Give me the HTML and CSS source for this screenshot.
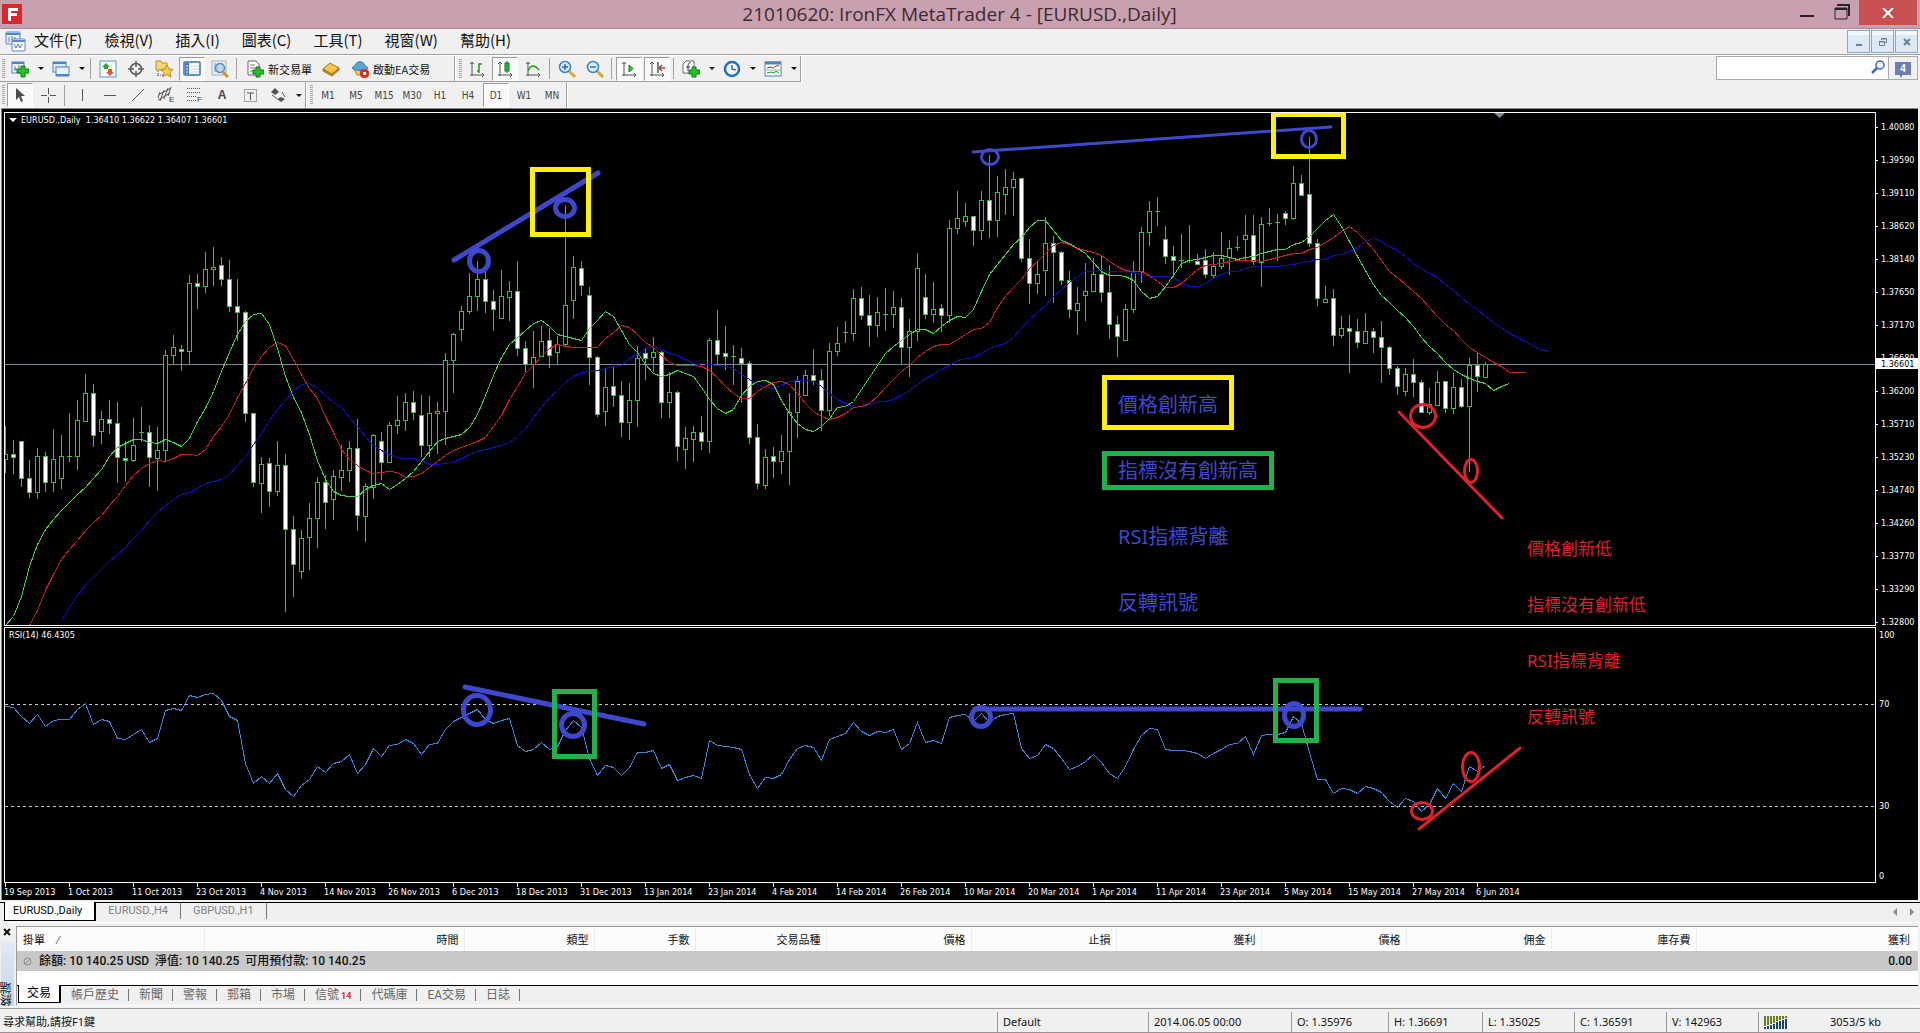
FILE: index.html
```html
<!DOCTYPE html>
<html lang="zh-Hant">
<head>
<meta charset="utf-8">
<title>21010620: IronFX MetaTrader 4 - [EURUSD.,Daily]</title>
<link rel="stylesheet" href="styles.css">
</head>
<body>
<header class="titlebar">
  <svg class="app-logo" width="20" height="20" viewBox="0 0 20 20"><rect width="20" height="20" fill="#e0242b"/><path d="M6 4h10v3H9v2h6v3H9v5H6z" fill="#fff"/></svg>
  <h1>21010620: IronFX MetaTrader 4 - [EURUSD.,Daily]</h1>
  <div class="win-buttons">
    <button class="win-min" aria-label="最小化"><svg width="14" height="14"><path d="M0 12h14" stroke="#2a2028" stroke-width="2"/></svg></button>
    <button class="win-max" aria-label="還原"><svg width="16" height="16"><path d="M1 4h12v11H1z" fill="none" stroke="#2a2028"/><path d="M1 5h12M3 1h12v11" fill="none" stroke="#2a2028" stroke-width="2"/></svg></button>
    <button class="win-close" aria-label="關閉"><svg width="12" height="10"><path d="M1 0l10 10M11 0L1 10" stroke="#fff" stroke-width="2"/></svg></button>
  </div>
</header>

<nav class="menubar">
  <svg class="menu-logo" width="21" height="21" viewBox="0 0 21 21"><rect x="1" y="1" width="14" height="12" rx="1" fill="#e4eefb" stroke="#5a86c6"/><path d="M1 3h14" stroke="#5a86c6" stroke-width="2"/><path d="M4 6v5M7 5v4M10 6v4" stroke="#5a86c6"/><rect x="7" y="8" width="13" height="12" rx="1" fill="#fff" stroke="#5a86c6"/><path d="M7 10h13" stroke="#5a86c6" stroke-width="2"/><path d="M9 13l2 4 2-4 2 4 2-4" fill="none" stroke="#4a78bc"/></svg>
  <button>文件(F)</button><button>檢視(V)</button><button>插入(I)</button><button>圖表(C)</button><button>工具(T)</button><button>視窗(W)</button><button>幫助(H)</button>
  <div class="mdi-buttons">
    <button aria-label="最小化圖表"><svg width="10" height="10"><path d="M2 8h6" stroke="#6d7f92" stroke-width="2"/></svg></button>
    <button aria-label="還原圖表"><svg width="10" height="10"><path d="M1.500 4.500h5v4h-5zM3.500 3V1.500h5v4H7" fill="none" stroke="#6d7f92"/><path d="M1 5h6M3 2h6" stroke="#6d7f92"/></svg></button>
    <button aria-label="關閉圖表"><svg width="10" height="10"><path d="M2 2l6 6M8 2L2 8" stroke="#6d7f92" stroke-width="2"/></svg></button>
  </div>
</nav>

<div class="toolbar top-toolbar">
  <div class="group main-group">
    <span class="grip"></span>
    <button class="tool" aria-label="新圖表"><svg viewBox="0 0 18 18"><rect x="1" y="2" width="12" height="11" fill="#f6faff" stroke="#4f84bd"/><path d="M1 3h12" stroke="#4f84bd" stroke-width="2"/><path d="M4 6v5M3 9h3M8 5v4" stroke="#5d7894"/><path d="M10 6h4v3h4v4h-4v4h-4v-4H6V9h4z" fill="#25c425" stroke="#107a10"/></svg></button><button class="drop" aria-label="更多"></button>
    <button class="tool" aria-label="範本組"><svg viewBox="0 0 18 18"><rect x="1" y="2" width="13" height="10" fill="#d9e9f8" stroke="#4f84bd"/><path d="M1 3h13" stroke="#4f84bd" stroke-width="2"/><rect x="4" y="7" width="13" height="9" fill="#e9f3fc" stroke="#4f84bd"/><path d="M4 15h13" stroke="#4f84bd" stroke-width="2"/></svg></button><button class="drop" aria-label="更多"></button>
    <span class="sep"></span>
    <button class="tool" aria-label="市場報價"><svg viewBox="0 0 18 18"><rect x="1" y="1" width="16" height="16" fill="#f8fcff" stroke="#4f9bd2"/><path d="M3 7l4-4 4 4H9v2H5V7z" fill="#28a830"/><path d="M7 12l4 4 4-4h-2V9H9v3z" fill="#e0562c"/></svg></button>
    <button class="tool" aria-label="數據窗口"><svg viewBox="0 0 18 18"><circle cx="9" cy="9" r="5.500" fill="none" stroke="#555" stroke-width="1.500"/><path d="M9 1v6M9 11v6M1 9h6M11 9h6" stroke="#555" stroke-width="1.500"/></svg></button>
    <button class="tool" aria-label="收藏"><svg viewBox="0 0 18 18"><path d="M1 3V1h5l1 2h5v7H1z" fill="#f4d673" stroke="#b9912c"/><path d="M3 11v6M3 15h5" stroke="#444" stroke-dasharray="1 1"/><path d="M12 5l2 4 4 .5-3 3 1 4.500-4-2.500-4 2.500 1-4.500-3-3 4-.5z" fill="#f9cf3d" stroke="#b9862a"/></svg></button>
    <button class="tool pressed" aria-label="導航"><svg viewBox="0 0 18 18"><rect x="1" y="2" width="16" height="13" rx="1" fill="#fff" stroke="#2f6fb8" stroke-width="1.500"/><path d="M2 3h4v11H2z" fill="#3b7cc4"/><path d="M8 6h8M8 9h8M8 12h8" stroke="#c5d3e4"/><path d="M3 6h2M3 9h2M3 12h2" stroke="#fff"/></svg></button>
    <button class="tool" aria-label="策略測試"><svg viewBox="0 0 18 18"><rect x="1" y="1" width="14" height="14" fill="#e8eef5" stroke="#9fb0c0"/><path d="M4 3v9M7 3v9M11 3v9" stroke="#6c8fb3"/><circle cx="9" cy="8" r="4.500" fill="#b8d9ee" fill-opacity=".7" stroke="#5b8fb5" stroke-width="1.500"/><path d="M12 12l5 5" stroke="#c79a2d" stroke-width="3"/></svg></button>
    <span class="sep"></span>
    <button class="labelled"><svg viewBox="0 0 18 18"><path d="M2 1h8l3 3v11H2z" fill="#fff" stroke="#666"/><path d="M4 5h5M4 8h6M4 11h5" stroke="#777"/><path d="M10 7h4v3h4v4h-4v3h-4v-3H7v-4h3z" fill="#25c425" stroke="#107a10"/></svg>新交易單</button>
    <button class="tool" aria-label="編輯器"><svg viewBox="0 0 18 18"><path d="M1 9l7-6 9 5-7 7z" fill="#f3c74b" stroke="#a8741a"/><path d="M1 9v2l9 5 7-6V8l-7 6z" fill="#c98e1d" stroke="#a8741a"/></svg></button>
    <button class="labelled ea-trade"><svg viewBox="0 0 18 18"><path d="M3 9h12l-2 6H6z" fill="#f2c94e" stroke="#b48523"/><path d="M1 8c1-2 3-1 4-4 1-3 7-3 8 0 1 3 3 2 4 4-3 3-13 3-16 0z" fill="#58a6d8" stroke="#2f79ad"/><rect x="9" y="9" width="9" height="9" rx="4" fill="#d9301c"/><rect x="12" y="12" width="3" height="3" fill="#fff"/></svg>啟動EA交易</button>
  </div>
  <div class="group">
    <span class="grip"></span>
    <button class="tool" aria-label="柱狀圖"><svg viewBox="0 0 18 18"><path d="M4 2v14M2 15h14M2 4l2-2 2 2M14 13l2 2-2 2" class="axis"/><path d="M9 11h2V4h3M11 4v9" fill="none" stroke="#189a18" stroke-width="1.500"/></svg></button>
    <button class="tool pressed" aria-label="K線圖"><svg viewBox="0 0 18 18"><path d="M4 2v14M2 15h14M2 4l2-2 2 2M14 13l2 2-2 2" class="axis"/><path d="M11 1v12" stroke="#0b7a1b"/><rect x="9" y="3" width="4" height="8" fill="#24b534" stroke="#0b7a1b"/></svg></button>
    <button class="tool" aria-label="折線圖"><svg viewBox="0 0 18 18"><path d="M4 2v14M2 15h14M2 4l2-2 2 2M14 13l2 2-2 2" class="axis"/><path d="M4 11c3-6 6-7 11-1" fill="none" stroke="#189a18" stroke-width="1.500"/></svg></button>
    <span class="sep"></span>
    <button class="tool" aria-label="放大"><svg viewBox="0 0 18 18"><path d="M11 11l6 6" stroke="#d6ab33" stroke-width="3"/><circle cx="7" cy="7" r="5.500" fill="#d8efff" stroke="#3d83c4" stroke-width="1.500"/><path d="M4 7h6M7 4v6" stroke="#2a6fb4" stroke-width="1.500"/></svg></button>
    <button class="tool" aria-label="縮小"><svg viewBox="0 0 18 18"><path d="M11 11l6 6" stroke="#d6ab33" stroke-width="3"/><circle cx="7" cy="7" r="5.500" fill="#d8efff" stroke="#3d83c4" stroke-width="1.500"/><path d="M4 7h6" stroke="#2a6fb4" stroke-width="1.500"/></svg></button>
    <span class="sep"></span>
    <button class="tool pressed" aria-label="自動捲動"><svg viewBox="0 0 18 18"><path d="M4 2v14M2 15h14M2 4l2-2 2 2M14 13l2 2-2 2" class="axis"/><path d="M9 5l4 3.500L9 12z" fill="#3fc04a" stroke="#0b7a1b"/></svg></button>
    <button class="tool pressed" aria-label="圖表平移"><svg viewBox="0 0 18 18"><path d="M4 2v14M2 15h14M2 4l2-2 2 2M14 13l2 2-2 2" class="axis"/><path d="M10 2v11" stroke="#2a5f96" stroke-width="1.500"/><path d="M17 8h-5M14 5l-3 3 3 3" fill="none" stroke="#b4441c" stroke-width="1.500"/></svg></button>
    <span class="sep"></span>
    <button class="tool" aria-label="指標"><svg viewBox="0 0 18 18"><path d="M4 1h8v12H1V4z" fill="#fff" stroke="#666"/><path d="M9 3c-2-1-3 1-3 3v5M4 7h4" fill="none" stroke="#333"/><path d="M10 7h4v3h4v4h-4v3h-4v-3H7v-4h3z" fill="#25c425" stroke="#107a10"/></svg></button><button class="drop" aria-label="更多"></button>
    <button class="tool" aria-label="週期"><svg viewBox="0 0 18 18"><circle cx="9" cy="9" r="7" fill="#f4faff" stroke="#2372bd" stroke-width="2.500"/><path d="M9 5v4l4 1" fill="none" stroke="#334" stroke-width="1.200"/></svg></button><button class="drop" aria-label="更多"></button>
    <button class="tool" aria-label="模板"><svg viewBox="0 0 18 18"><rect x="1" y="2" width="16" height="14" fill="#fff" stroke="#4f84bd"/><path d="M1 3h16" stroke="#4f84bd" stroke-width="3"/><path d="M3 8l3-1 3 1 3-2 3-.5" fill="none" stroke="#8a3d1d"/><path d="M3 13l4-1 3 1 2-2 3 2" fill="none" stroke="#189a18"/><path d="M1 10h16" stroke="#9ab"/></svg></button><button class="drop" aria-label="更多"></button>
  </div>
  <div class="search">
    <input type="text" aria-label="搜尋">
    <svg class="search-icon" width="14" height="14" viewBox="0 0 14 14"><circle cx="9" cy="5" r="4" fill="#eef5ff" stroke="#3a63c0" stroke-width="1.500"/><path d="M6 8l-5 5" stroke="#3a63c0" stroke-width="2.500"/></svg>
    <button class="chat"><svg width="16" height="4" viewBox="0 0 16 4" class="tail"><path d="M3 0h4v4z" fill="#6980b0"/></svg><span>4</span></button>
  </div>
</div>

<div class="toolbar low-toolbar">
  <div class="group">
    <span class="grip"></span>
    <button class="tool pressed" aria-label="游標"><svg viewBox="0 0 18 18"><path d="M5 2v12l3-3 2 5 2-1-2-5h4z" fill="#4c4c4c"/></svg></button>
    <button class="tool" aria-label="十字"><svg viewBox="0 0 18 18"><path d="M9.500 2v6M9.500 11v6M2 9.500h6M11 9.500h6" class="pen"/></svg></button>
    <span class="sep"></span>
    <button class="tool" aria-label="垂直線"><svg viewBox="0 0 18 18"><path d="M9.500 3v12" class="pen"/></svg></button>
    <button class="tool" aria-label="水平線"><svg viewBox="0 0 18 18"><path d="M3 9.500h12" class="pen"/></svg></button>
    <button class="tool" aria-label="趨勢線"><svg viewBox="0 0 18 18"><path d="M3 15L15 3" class="pen"/></svg></button>
    <button class="tool" aria-label="通道"><svg viewBox="0 0 18 18"><path d="M1 9l13-7M1 14l12-7M3 15l4-11M7 13l4-11M11 10l3-9M1 12l2-6" class="pen"/><text x="12" y="16" class="tag">E</text></svg></button>
    <button class="tool" aria-label="斐波那契"><svg viewBox="0 0 18 18"><path d="M2 2.500h14M2 6.500h14M2 10.500h9M2 14.500h9" class="pen" stroke-dasharray="1 1"/><text x="12" y="16" class="tag">F</text></svg></button>
    <button class="tool glyph">A</button>
    <button class="tool" aria-label="文字標籤"><svg viewBox="0 0 18 18"><rect x="3.500" y="3.500" width="12" height="12" class="pen" stroke-dasharray="1 1"/><path d="M6 7h7M9.500 7v7" class="pen" stroke-width="2"/></svg></button>
    <button class="tool" aria-label="箭頭"><svg viewBox="0 0 18 18"><path d="M2 6l4-4 4 4-4 3zM8 13l4-2 4 2-4 3z" fill="#555"/><path d="M3 9l5 4M13 6l3 5" class="pen"/></svg></button><button class="drop" aria-label="更多"></button>
  </div>
  <div class="group periods">
    <span class="grip"></span>
    <button class="tool">M1</button><button class="tool">M5</button><button class="tool">M15</button><button class="tool">M30</button><button class="tool">H1</button><button class="tool">H4</button><button class="tool pressed">D1</button><button class="tool">W1</button><button class="tool">MN</button>
  </div>
</div>

<main class="chart">
  <section class="pane price-pane"><svg id="price"></svg>
    <p class="pane-title"><span class="caret"></span>EURUSD.,Daily&nbsp; 1.36410 1.36622 1.36407 1.36601</p>
  </section>
  <svg class="scale" id="price-scale"></svg>
  <section class="pane rsi-pane"><svg id="rsi"></svg>
    <p class="pane-title">RSI(14) 46.4305</p>
  </section>
  <svg class="scale" id="rsi-scale"></svg>
  <svg class="dates" id="dates"></svg>
  <ul class="note note-high"><li>價格創新高</li><li>指標沒有創新高</li><li>RSI指標背離</li><li>反轉訊號</li></ul>
  <ul class="note note-low"><li>價格創新低</li><li>指標沒有創新低</li><li>RSI指標背離</li><li>反轉訊號</li></ul>
</main>

<nav class="chart-tabs">
  <a class="active" href="#d">EURUSD.,Daily</a><a href="#h4">EURUSD.,H4</a><a href="#h1">GBPUSD.,H1</a>
  <svg class="tab-arrows" width="22" height="8"><path d="M4 0v8L0 4zM17 0v8l4-4z" fill="#8c8c8c"/></svg>
</nav>

<section class="terminal">
  <aside class="side"><button aria-label="關閉終端"><svg width="8" height="8"><path d="M1 1l6 6M7 1L1 7" stroke="#111" stroke-width="2"/></svg></button><span>終端</span></aside>
  <div class="terminal-body">
    <table>
      <colgroup><col class="c1"><col class="c2"><col class="c3"><col class="c4"><col class="c5"><col class="c6"><col class="c6"><col class="c6"><col class="c6"><col class="c6"><col class="c6"><col></colgroup>
      <thead><tr><th>掛單 <i>/</i></th><th>時間</th><th>類型</th><th>手數</th><th>交易品種</th><th>價格</th><th>止損</th><th>獲利</th><th>價格</th><th>佣金</th><th>庫存費</th><th>獲利</th></tr></thead>
      <tbody><tr><td colspan="11"><svg width="9" height="9"><circle cx="4.500" cy="4.500" r="3.500" fill="none" stroke="#888"/><path d="M2 7l5-5" stroke="#888"/></svg>餘額: 10 140.25 USD&nbsp; 淨值: 10 140.25&nbsp; 可用預付款: 10 140.25</td><td>0.00</td></tr></tbody>
    </table>
    <nav class="terminal-tabs"><a class="active" href="#t">交易</a><a href="#a">帳戶歷史</a><a href="#n">新聞</a><a href="#w">警報</a><a href="#m">郵箱</a><a href="#k">市場</a><a href="#s">信號<b>14</b></a><a href="#c">代碼庫</a><a href="#e">EA交易</a><a href="#l">日誌</a></nav>
  </div>
</section>

<footer class="status">
  <span class="help">尋求幫助,請按F1鍵</span><span class="s1">Default</span><span class="s2">2014.06.05 00:00</span><span class="s3">O: 1.35976</span><span class="s4">H: 1.36691</span><span class="s5">L: 1.35025</span><span class="s5">C: 1.36591</span><span class="s5">V: 142963</span>
  <span class="net"><svg width="24" height="13" viewBox="0 0 24 13"><path d="M1 0v10M4 0v9M7 0v8M10 0v7M13 0v5M16 0v4M19 0v3M22 0v2" stroke="#66801c" stroke-width="2"/><path d="M1 11v2M4 10v3M7 9v4M10 8v5M13 6v7M16 5v8M19 4v9M22 3v10" stroke="#1c4668" stroke-width="2"/></svg>3053/5 kb</span>
</footer>
<script src="chart.js"></script>
</body>
</html>
```
FILE: styles.css
```css
* { box-sizing: border-box; }
body {
  margin: 0;
  min-height: 100vh;
  display: flex;
  flex-direction: column;
  background: #f0f0f0;
  color: #111;
  font: 12px "Liberation Sans", "Noto Sans CJK TC", sans-serif;
  border-bottom: 1px solid #a58b95;
}
button { border: 0; padding: 0; background: none; color: inherit; font: inherit; }
a { color: inherit; text-decoration: none; }
ul, p, h1 { margin: 0; padding: 0; list-style: none; }

.titlebar {
  position: relative;
  height: 29px;
  display: flex;
  align-items: center;
  justify-content: space-between;
  padding: 0 3px 0 2px;
  background: #c9a0b0;
  border-bottom: 1px solid #ad8797;
}
.titlebar h1 { font: 19px/28px "Open Sans", "Noto Sans", sans-serif; color: #3b2a32; }
.win-buttons { display: flex; align-items: flex-start; position: absolute; right: 3px; top: 0; }
.win-buttons svg { display: block; }
.win-min { padding: 4px 20px 0 0; }
.win-max { padding: 4px 9px 0 0; }
.win-close { width: 58px; height: 25px; background: #c75050; display: grid; place-items: center; }
.titlebar::after { content: ""; width: 20px; }

.menubar {
  height: 26px;
  display: flex;
  align-items: center;
  gap: 22px;
  padding: 0 2px 0 5px;
  border-bottom: 1px solid #a0a0a0;
  font: 15px/21px "Noto Sans CJK TC", sans-serif;
}
.menubar > button { padding-bottom: 4px; }
.menu-logo { margin-right: -14px; }
.mdi-buttons { display: flex; gap: 1px; margin-left: auto; }
.mdi-buttons button { width: 23px; height: 23px; border: 1px solid #93a5bb; background: linear-gradient(#f2f8fd 20%, #dceaf8 20%); display: grid; place-items: center; }

.toolbar { height: 27px; display: flex; align-items: stretch; }
.top-toolbar { border-top: 1px solid #fff; }
.low-toolbar { height: 26px; }
.group { display: flex; align-items: center; border-right: 1px solid #a0a0a0; box-shadow: 1px 0 #fff; border-bottom: 1px solid #a0a0a0; }
.low-toolbar .group { border-bottom: 0; }
.group + .group { padding-left: 2px; }
.grip { width: 3px; height: 20px; margin: 0 1px 0 2px; background: repeating-linear-gradient(#a8a8a8 0 1px, #f0f0f0 1px 2px); }
.tool { width: 28px; height: 24px; display: grid; place-items: center; color: #444; font-size: 10px; }
.tool svg, .labelled svg { width: 18px; height: 18px; }
.pressed { width: 26px; margin: 0 1px; border: 1px solid #9c9c9c; border-right-color: #fff; border-bottom-color: #fff; background: #f9f9f9; }
.drop { width: 13px; height: 24px; display: grid; place-items: center; }
.drop::after { content: ""; border: 3px solid transparent; border-top-color: #111; border-bottom: 0; }
.sep { width: 1px; height: 21px; margin: 0 3px 0 2px; background: #a0a0a0; }
.labelled { display: flex; align-items: center; gap: 4px; padding: 0 5px 0 6px; font: 11px "Noto Sans CJK TC", sans-serif; }
.ea-trade { padding-right: 24px; }
.glyph { font-weight: bold; font-size: 12px; }
.periods .tool { font-family: "DejaVu Sans Condensed", sans-serif; }
.axis { fill: none; stroke: #555; stroke-width: 1; }
.pen { stroke: #555; stroke-width: 1; fill: none; }
.tag { font: 8px "Liberation Sans", sans-serif; fill: #333; }

.search { position: relative; margin-left: auto; margin-right: 2px; display: flex; height: 24px; }
.search input { width: 173px; border: 1px solid #a9a9a9; background: #fff; padding: 0 20px 0 4px; }
.search-icon { position: absolute; left: 155px; top: 4px; }
.chat { position: relative; width: 29px; border: 1px solid #a9a9a9; border-left: 0; display: grid; place-items: center; }
.chat span { width: 16px; height: 13px; background: #6980b0; color: #fff; font: bold 10px/13px "Liberation Sans", sans-serif; }
.chat .tail { position: absolute; left: 6px; top: 17px; }

.chart {
  position: relative;
  flex: 1;
  display: grid;
  grid-template: minmax(514px, 1fr) 256px 16px / 1fr 42px;
  row-gap: 1px;
  margin: 0 2px 0 1px;
  padding: 3px 0 0 2px;
  background: #000;
  border-left: 1px solid #888;
  border-top: 1px solid #888;
  color: #fff;
  overflow: hidden;
}
.pane { position: relative; border: 1px solid #fff; min-width: 0; overflow: hidden; }
.pane svg { display: block; width: 100%; height: 100%; }
.pane-title { position: absolute; left: 4px; top: 1px; font: 9px/13px "DejaVu Sans Condensed", sans-serif; color: #fff; }
.caret { display: inline-block; border: 4px solid transparent; border-top-color: #fff; border-bottom: 0; margin: 0 4px 1px 0; }
.scale { width: 42px; height: 100%; overflow: visible; }
.dates { grid-column: 1 / 3; width: 100%; height: 16px; overflow: visible; }
.chart text { font: 9px "DejaVu Sans Condensed", sans-serif; fill: #fff; }
.chart .tag-text { fill: #000; }
.crisp { shape-rendering: crispEdges; }
.note { position: absolute; font-family: "Noto Sans", "Noto Sans CJK TC", sans-serif; }
.note-high { left: 1116px; top: 263px; font-size: 20px; line-height: 66px; color: #3f48cc; }
.note-low { left: 1525px; top: 412px; font-size: 17px; line-height: 56px; color: #dc232b; }

.chart-tabs {
  height: 21px;
  margin-top: 2px;
  display: flex;
  align-items: flex-start;
  padding-left: 4px;
  border-top: 1px solid #000;
  border-bottom: 1px solid #fff;
  font: 11px Roboto, sans-serif;
  color: #808080;
}
.chart-tabs a { padding: 0 12px; line-height: 16px; }
.chart-tabs a + a { border-right: 1px solid #777; }
.chart-tabs .active { margin-top: -1px; padding: 0 12px 0 8px; line-height: 18px; color: #000; background: #fff; border: 1px solid #000; border-top: 0; border-right-width: 2px; }
.tab-arrows { margin: 5px 5px 0 auto; }

.terminal { display: flex; margin-top: 3px; }
.side { width: 16px; display: flex; flex-direction: column; align-items: center; gap: 5px; padding: 1px 2px 0 0; }
.side button { height: 10px; }
.side svg { display: block; }
.side span { flex: 1; width: 13px; background: linear-gradient(#c2d5e5, #dfeaf4); writing-mode: vertical-rl; transform: rotate(180deg); font-size: 12px; line-height: 13px; }
.terminal-body { flex: 1; min-width: 0; margin-right: 2px; border: 1px solid #999; border-right: 0; border-bottom: 1px solid #fff; background: #fff; }
table { width: 100%; border-collapse: collapse; table-layout: fixed; }
.c1 { width: 187px; } .c2 { width: 260px; } .c3 { width: 130px; } .c4 { width: 101px; } .c5 { width: 131px; } .c6 { width: 145px; }
th { height: 24px; padding: 0 5px; font: 11px "Noto Sans", "Noto Sans CJK TC", sans-serif; text-align: right; border-right: 1px solid #e8ecf4; background: #fcfcfc; }
th:first-child { text-align: left; padding-left: 6px; }
th:last-child { border-right: 0; padding-right: 8px; }
th i { margin-left: 8px; color: #777; }
td { height: 20px; padding: 0 6px; background: #c8c8c8; font: 500 12px/18px Roboto, "Noto Sans CJK TC", sans-serif; }
td svg { margin-right: 7px; vertical-align: -1px; }
td:last-child { text-align: right; }
.terminal-tabs { display: flex; margin-top: 14px; padding-left: 1px; height: 20px; border-top: 1px solid #000; background: #f0f0f0; font-family: Roboto, "Noto Sans CJK TC", sans-serif; color: #666; }
.terminal-tabs a { position: relative; padding: 0 10px; line-height: 18px; }
.terminal-tabs a + a::after { content: ""; position: absolute; right: 0; top: 3px; height: 12px; border-right: 1px solid #777; }
.terminal-tabs .active { margin-top: -1px; line-height: 17px; height: 18px; color: #000; background: #fff; border: solid #000; border-width: 0 2px 1px 1px; padding: 0 8px; }
.terminal-tabs b { margin-left: 2px; font-size: 9px; color: #dd2a2a; }

.status { display: flex; height: 24px; margin-top: 2px; padding-top: 3px; border-top: 1px solid #999; font: 11px/20px "Noto Sans", "Noto Sans CJK TC", sans-serif; }
.status span { height: 20px; padding-left: 5px; border-left: 1px solid #999; white-space: nowrap; }
.status .help { flex: 1; border: 0; padding-left: 3px; }
.s1 { width: 151px; } .s2 { width: 143px; } .s3 { width: 97px; } .s4 { width: 94px; } .s5 { width: 92px; }
.status .net { width: 162px; display: flex; align-items: center; gap: 42px; }
```
FILE: chart.js
```js
// Chart data is kept in thirds of a pixel, one entry per 8px bar.
const BAR = 8;
const row = v => Math.floor(v / 3);

// high, body top, body bottom, low, 1 = bearish (filled)
const candles = `950,1034,1048,1090,0 990,1034,1042,1094,1 994,994,1105,1133,1 1050,1105,1148,1166,1 1014,1040,1148,1169,0 1026,1040,1117,1147,1 957,1048,1117,1146,0 975,1040,1105,1139,0 909,1040,1040,1058,0 870,931,1040,1082,0
792,850,933,936,0 822,850,976,1013,1 904,928,964,1004,0 870,928,940,974,1 877,940,1042,1121,1 993,1045,1052,1118,1 924,1006,1052,1058,0 891,967,967,998,0 945,967,1042,1133,1 951,1021,1046,1145,0
720,736,1021,1057,0 675,712,737,767,0 705,718,724,785,1 495,520,724,762,0 493,520,529,599,1 426,478,529,551,0 411,472,479,530,0 441,466,508,529,1 450,508,590,607,1 507,590,607,693,1
603,607,910,938,1 910,910,1117,1133,1 1041,1063,1120,1211,0 1044,1060,1144,1193,1 993,1066,1144,1158,0 1032,1066,1258,1508,1 1218,1258,1363,1463,1 1260,1285,1384,1409,0 1179,1225,1282,1380,0 1101,1117,1225,1316,0
1096,1117,1177,1259,1 1080,1099,1168,1230,0 1005,1081,1102,1145,0 993,1016,1081,1118,0 927,1015,1216,1265,1 1120,1130,1219,1298,0 972,976,1132,1169,0 968,994,1057,1112,1 936,946,1057,1061,0 858,931,946,974,0
850,877,931,963,0 843,877,907,930,1 855,916,1006,1041,1 858,910,1006,1041,0 877,905,910,1034,0 730,751,905,1005,0 669,673,751,849,0 588,604,658,695,0 489,559,604,614,0 453,508,559,603,0
480,508,574,609,1 541,574,598,665,1 480,559,625,629,0 514,544,562,635,0 453,545,715,738,1 693,715,763,788,1 663,742,763,836,0 648,694,740,742,0 654,691,737,776,1 678,704,727,763,0
285,586,704,708,0 438,472,571,627,0 453,475,526,560,1 532,556,742,827,1 738,742,913,922,1 775,832,905,948,0 771,829,856,893,1 814,856,937,983,1 819,871,937,992,0 709,745,871,953,0
715,730,745,811,1 682,727,742,788,0 724,727,877,926,1 786,847,877,924,0 843,847,1009,1055,1 951,985,1018,1077,0 948,967,989,1058,0 918,967,994,1022,1 684,691,994,1031,0 600,691,733,762,1
648,730,739,780,1 705,740,742,827,0 714,745,760,881,1 753,760,982,1004,1 942,982,1120,1138,1 1017,1042,1127,1138,0 1011,1039,1054,1106,1 975,1024,1054,1094,0 849,907,1024,1127,0 798,814,907,986,0
780,796,856,858,0 717,796,811,827,1 777,811,901,965,1 699,724,901,918,0 651,700,724,738,0 633,667,669,701,0 537,565,670,695,0 531,565,616,632,1 555,616,647,711,1 561,607,647,681,0
534,614,616,665,0 543,592,613,654,0 564,592,712,763,1 628,664,712,801,0 429,475,664,695,0 492,562,613,629,1 516,598,612,641,0 582,595,616,668,1 331,355,616,641,0 243,325,355,372,0
279,319,334,352,0 318,319,361,410,1 243,271,361,392,0 135,271,331,386,1 198,247,331,383,0 177,232,253,317,0 186,208,232,318,0 205,205,445,458,1 388,445,520,584,1 455,493,520,552,0
321,400,482,560,0 378,400,427,581,1 423,427,512,527,1 484,511,598,626,1 531,580,601,675,0 459,544,556,635,0 446,493,544,544,0 437,493,547,576,1 465,547,643,687,1 618,643,679,741,1
584,598,691,695,0 453,485,598,609,0 351,367,485,521,0 273,304,367,408,0 261,305,307,350,0 348,388,439,462,1 408,439,451,501,1 372,450,452,474,0 345,450,452,459,0 432,455,463,464,1
418,451,493,506,1 426,469,496,506,0 366,445,469,479,0 390,415,442,497,0 378,412,414,424,0 315,376,388,450,0 315,376,454,467,1 321,343,457,531,0 294,341,343,350,0 312,338,338,455,0
303,310,325,347,1 168,220,325,332,0 195,220,256,258,1 81,253,400,413,1 387,400,566,590,1 528,568,577,581,0 537,565,676,708,1 618,655,677,686,0 615,655,664,789,1 627,664,697,714,1
611,664,700,702,0 654,664,682,729,1 633,682,712,819,1 708,712,775,795,1 768,775,829,855,1 774,793,845,860,0 747,793,817,863,1 810,817,907,911,1 835,883,907,916,0 783,817,886,889,0
813,814,895,911,1 789,832,895,914,0 808,832,889,896,1 744,766,889,1086,0 729,766,800,846,1 757,763,802,803,0`.split(/\s+/).map(s => s.split(',').map(Number));

// Moving averages: first bar, then one value per bar
const averages = [
  { color: '#1010b4', start: 7, values: [1532,1491,1455,1425,1402,1378,1354,1332,1311,1285,1261,1232,1208,1187,1167,1153,1147,1135,1121,1113,1107,1093,1065,1038,1003,970,932,898,870,843,824,820,836,855,878,892,921,950,980,1005,1020,1034,1043,1046,1046,1051,1062,1064,1060,1057,1045,1034,1023,1018,1012,1006,996,980,955,923,893,862,840,817,798,787,784,781,775,769,765,745,732,716,710,718,729,737,749,761,765,764,765,769,776,793,807,822,833,834,826,815,811,811,814,829,851,867,881,893,889,882,875,874,868,857,840,823,805,794,778,765,750,744,741,731,716,706,699,682,655,628,607,586,560,537,516,498,484,484,482,483,483,483,486,493,499,500,500,501,518,530,529,520,505,493,484,483,475,470,468,468,469,465,463,457,453,448,447,436,434,423,412,393,384,393,408,422,440,460,475,490,503,523,542,563,582,599,618,637,652,669,681,695,709,718,723] },
  { color: '#c82222', start: 3, values: [1545,1500,1442,1392,1348,1318,1290,1262,1237,1215,1186,1160,1125,1095,1075,1060,1051,1054,1046,1034,1034,1036,1018,980,949,912,863,820,774,738,711,698,707,748,793,836,866,918,968,1018,1048,1067,1080,1090,1087,1084,1088,1102,1098,1090,1073,1055,1037,1020,1012,1003,994,983,950,915,869,828,790,765,740,716,703,710,712,712,712,712,686,668,646,652,673,696,712,735,756,765,765,765,770,780,802,829,851,864,866,845,828,818,814,824,850,880,903,919,928,922,911,893,889,880,858,833,809,783,765,742,723,708,703,703,687,673,658,655,636,593,558,533,507,476,455,430,407,398,403,415,421,428,436,453,470,480,483,485,497,515,531,532,520,500,477,466,464,460,453,451,452,452,453,449,442,437,431,430,418,411,397,383,363,349,367,391,418,450,483,502,522,545,565,592,618,642,662,688,712,727,742,756,768,787,787,787] },
  { color: '#40d83c', start: 0, values: [1545,1519,1458,1370,1303,1258,1228,1202,1178,1154,1133,1104,1078,1038,1012,999,987,988,998,1000,988,997,1008,985,935,894,843,784,728,673,634,614,610,643,715,798,862,907,972,1051,1108,1143,1156,1160,1159,1139,1127,1120,1138,1124,1106,1084,1053,1024,995,985,979,972,952,913,857,795,742,704,683,660,641,631,649,673,680,685,691,655,630,604,619,660,703,728,763,790,799,792,781,790,800,832,867,895,910,897,855,829,813,811,824,870,910,940,958,964,948,925,893,888,875,838,802,765,730,710,692,672,659,658,669,650,631,619,622,597,545,493,463,433,402,381,352,332,331,360,390,401,416,431,457,484,496,497,500,512,545,565,558,530,495,459,452,448,441,436,436,441,447,442,440,431,423,418,418,402,397,380,355,332,313,350,395,439,482,524,555,578,600,622,650,682,709,730,756,778,792,804,814,821,841,830,820] }
];

const rsi = [259,262,290,309,284,318,302,297,297,268,250,312,298,305,354,357,343,328,367,356,270,265,270,226,232,223,220,240,288,300,430,489,470,489,461,507,528,497,478,439,457,430,423,402,459,432,385,408,377,373,357,369,402,373,369,328,305,292,280,267,298,310,300,295,375,393,387,368,388,378,330,300,322,415,466,436,443,466,442,397,397,391,444,433,481,472,466,474,362,376,380,382,387,463,505,472,474,462,417,385,376,382,421,358,348,340,308,333,346,334,337,328,387,371,308,367,361,369,291,286,283,304,280,308,288,283,279,385,414,405,373,384,415,447,438,425,404,427,461,474,438,389,346,325,328,387,391,391,393,399,414,400,387,374,369,350,402,346,343,343,337,288,310,397,478,478,520,505,507,519,498,504,516,543,562,535,544,574,554,505,535,490,514,439,455,435];

const line = (values, start, dy, color) =>
  `<polyline class="crisp" fill="none" stroke="${color}" points="${values.map((v, i) => `${(start + i) * BAR + .5},${row(v) + dy + .5}`).join(' ')}"/>`;
const box = (x, y, w, h, color) =>
  `<rect x="${x + 2.5}" y="${y + 2.5}" width="${w - 5}" height="${h - 5}" fill="none" stroke="${color}" stroke-width="5"/>`;
const ring = (cx, cy, rx, ry, color, w) =>
  `<ellipse cx="${cx}" cy="${cy}" rx="${rx - w / 2}" ry="${ry - w / 2}" fill="none" stroke="${color}" stroke-width="${w}"/>`;
const stroke = (x1, y1, x2, y2, color, w) =>
  `<line x1="${x1}" y1="${y1}" x2="${x2}" y2="${y2}" stroke="${color}" stroke-width="${w}" stroke-linecap="round"/>`;

const BLUE = '#3f48cc', RED = '#dc232b', YELLOW = '#fff200', GREEN = '#22b14c', BULL = '#32c832';

// Price pane
let out = '<path class="crisp" d="M0 251.5H4000" stroke="#778899"/>';
candles.forEach(([h, t, b, l, full], i) => {
  const x = i * BAR, [H, T, B, L] = [h, t, b, l].map(v => row(v) - 3);
  out += `<rect x="${x}" y="${H}" width="1" height="${L - H}" fill="${BULL}"/>`;
  out += B - T < 2
    ? `<rect x="${x - 2}" y="${T}" width="5" height="1" fill="${BULL}"/>`
    : `<rect x="${x - 1.5}" y="${T + .5}" width="4" height="${B - T}" fill="${full ? '#fff' : '#000'}" stroke="${BULL}"/>`;
});
averages.forEach(a => { out += line(a.values, a.start, -3, a.color); });
out += '<path d="M1489 0h11l-5.500 5z" fill="#7b8a96"/>';
out += `<g transform="translate(-5 -113)">`
  + stroke(454, 260, 598, 173, BLUE, 5) + ring(479, 261, 12, 13, BLUE, 5) + ring(565, 208, 12, 11, BLUE, 5)
  + box(530, 167, 61, 70, YELLOW)
  + stroke(973, 152, 1331, 127, BLUE, 3) + ring(990, 157, 10, 9, BLUE, 3) + ring(1309, 139, 9, 10, BLUE, 3)
  + box(1271, 112, 75, 47, YELLOW) + box(1102, 375, 132, 55, YELLOW) + box(1102, 451, 172, 39, GREEN)
  + stroke(1399, 412, 1502, 518, RED, 3) + ring(1423, 416, 14, 13, RED, 3) + ring(1471, 471, 8, 13, RED, 3)
  + '</g>';
document.getElementById('price').innerHTML = out;

// RSI pane
document.getElementById('rsi').innerHTML =
  '<path class="crisp" d="M0 76.5H4000M0 178.5H4000" stroke="#c8c8c8" stroke-dasharray="3 3"/>'
  + line(rsi, 0, -8, '#3c84dc')
  + `<g transform="translate(-5 -628)">`
  + stroke(465, 687, 644, 724, BLUE, 5) + ring(477, 710, 16, 17, BLUE, 5) + ring(573, 725, 14, 14, BLUE, 5)
  + box(552, 689, 45, 70, GREEN)
  + stroke(975, 709, 1360, 709, BLUE, 5) + ring(981, 717, 12, 12, BLUE, 5) + ring(1294, 715, 12, 14, BLUE, 5)
  + box(1273, 678, 46, 65, GREEN)
  + stroke(1419, 829, 1520, 748, RED, 3) + ring(1422, 811, 12, 10, RED, 3) + ring(1471, 767, 10, 16, RED, 3)
  + '</g>';

// Scales
const prices = ['1.40080','1.39590','1.39110','1.38620','1.38140','1.37650','1.37170','1.36680','1.36200','1.35710','1.35230','1.34740','1.34260','1.33770','1.33290','1.32800'];
document.getElementById('price-scale').innerHTML = prices.map((p, i) =>
  `<rect y="${15 + i * 33}" width="2" height="1" fill="#fff"/><text x="5" y="${18 + i * 33}">${p}</text>`).join('')
  + '<rect y="246" width="43" height="11" fill="#fff"/><text class="tag-text" x="5" y="255">1.36601</text>';
document.getElementById('rsi-scale').innerHTML =
  [['100', 11], ['70', 80], ['30', 182], ['0', 252]].map(([t, y]) => `<text x="3" y="${y}">${t}</text>`).join('');
const dates = ['19 Sep 2013','1 Oct 2013','11 Oct 2013','23 Oct 2013','4 Nov 2013','14 Nov 2013','26 Nov 2013','6 Dec 2013','18 Dec 2013','31 Dec 2013','13 Jan 2014','23 Jan 2014','4 Feb 2014','14 Feb 2014','26 Feb 2014','10 Mar 2014','20 Mar 2014','1 Apr 2014','11 Apr 2014','23 Apr 2014','5 May 2014','15 May 2014','27 May 2014','6 Jun 2014'];
document.getElementById('dates').innerHTML = dates.map((d, i) =>
  `<rect x="${1 + i * 64}" y="-1" width="1" height="4" fill="#fff"/><text x="${i * 64}" y="11">${d}</text>`).join('');
```
